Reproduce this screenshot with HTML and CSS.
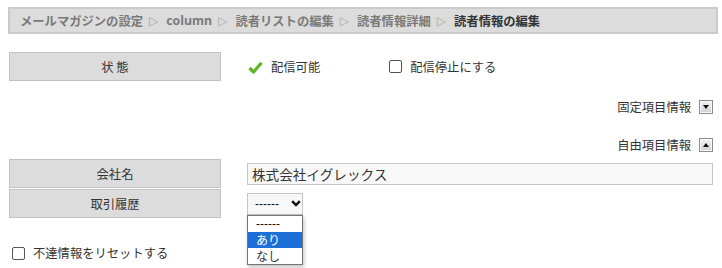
FILE: index.html
```html
<!DOCTYPE html>
<html lang="ja">
<head>
<meta charset="utf-8">
<link rel="stylesheet" href="styles.css">
</head>
<body>
<div class="crumb">
  <span class="c-link">メールマガジンの設定</span><span class="sep">▷</span><span class="c-link">column</span><span class="sep">▷</span><span class="c-link">読者リストの編集</span><span class="sep">▷</span><span class="c-link">読者情報詳細</span><span class="sep">▷</span><span class="c-cur">読者情報の編集</span>
</div>

<div class="row row-status">
  <div class="label">状 態</div>
  <div class="value">
    <svg class="check" width="15" height="13" viewBox="0 0 15 13"><path d="M1.5 7 L5.5 11 L13.5 1.8" fill="none" stroke="#5db828" stroke-width="3.2" stroke-linejoin="round"/></svg>
    <span class="ok">配信可能</span>
    <span class="cb"></span><span class="cb-text">配信停止にする</span>
  </div>
</div>

<div class="toggle t1"><span>固定項目情報</span><span class="tbtn"><span class="tri-down"></span></span></div>
<div class="toggle t2"><span>自由項目情報</span><span class="tbtn"><span class="tri-up"></span></span></div>

<div class="row row-company">
  <div class="label">会社名</div>
  <div class="value"><div class="input">株式会社イグレックス</div></div>
</div>
<div class="row row-history">
  <div class="label">取引履歴</div>
  <div class="value">
    <div class="select">
      <span class="sel-text">------</span>
      <svg class="chev" width="10" height="7" viewBox="0 0 10 7"><path d="M1.2 1.2 L5 5 L8.8 1.2" fill="none" stroke="#111" stroke-width="2.4"/></svg>
      <div class="popup">
        <div class="opt">------</div>
        <div class="opt sel">あり</div>
        <div class="opt">なし</div>
      </div>
    </div>
  </div>
</div>

<div class="reset"><span class="cb"></span><span class="cb-text">不達情報をリセットする</span></div>
</body>
</html>
```

FILE: styles.css
```css
html, body {
  margin: 0;
  padding: 0;
  background: #fff;
}
body {
  font-family: "Noto Sans CJK JP", "Noto Sans", sans-serif;
  font-size: 12px;
  color: #333;
  width: 722px;
  height: 268px;
  overflow: hidden;
}
.crumb {
  margin: 7px 4px 0 8px;
  height: 23px;
  border: 2px solid #cbcbcb;
  background: #dcdcdc;
  padding-left: 10px;
  display: flex;
  align-items: center;
  font-weight: bold;
  font-size: 12.3px;
  color: #7a7a7a;
  white-space: nowrap;
}
.c-link { font-family: "Open Sans", "Noto Sans CJK JP", sans-serif; }
.c-cur { color: #333; }
.sep {
  font-weight: normal;
  color: #a8a8a8;
  font-size: 12px;
  margin: 0 8px 0 6px;
  font-family: "DejaVu Sans", sans-serif;
}
.row {
  display: flex;
  margin-left: 9px;
}
.label {
  width: 210px;
  height: 27px;
  border: 1px solid #c2c2c2;
  background: #dcdcdc;
  display: flex;
  align-items: center;
  justify-content: center;
  font-size: 12.3px;
  color: #333;
}
.value {
  margin-left: 26px;
  display: flex;
  align-items: center;
}
.row-status { margin-top: 18px; }
.check { margin-left: 1px; margin-top: 1px; }
.ok { margin-left: 8px; font-size: 12.3px; }
.cb {
  display: inline-block;
  width: 11px;
  height: 11px;
  border: 1px solid #555;
  border-radius: 2px;
  background: #fff;
}
.row-status .cb { margin-left: 69px; }
.cb-text { margin-left: 8px; font-size: 12.3px; }
.toggle {
  display: flex;
  justify-content: flex-end;
  align-items: center;
  height: 14px;
  margin-right: 9px;
  font-size: 12.3px;
}
.t1 { margin-top: 19px; }
.t2 { margin-top: 24px; }
.tbtn {
  margin-left: 8px;
  width: 12px;
  height: 12px;
  border: 1px solid #8c8c8c;
  background: linear-gradient(#f2f2f2, #d2d2d2);
  display: flex;
  align-items: center;
  justify-content: center;
  box-shadow: inset 0 0 0 1px #fafafa;
}
.tri-down {
  width: 0; height: 0;
  border-left: 3px solid transparent;
  border-right: 3px solid transparent;
  border-top: 4px solid #111;
}
.tri-up {
  width: 0; height: 0;
  border-left: 3px solid transparent;
  border-right: 3px solid transparent;
  border-bottom: 4px solid #111;
}
.row-company { margin-top: 7px; }
.row-history { margin-top: 1px; }
.input {
  width: 460px;
  height: 20px;
  border: 1px solid #c6c6c6;
  background: #f8f8f8;
  padding-left: 4px;
  display: flex;
  align-items: center;
  font-size: 13.6px;
  color: #333;
}
.select {
  position: relative;
  width: 54px;
  height: 20px;
  border: 1px solid #c6c6c6;
  background: #f8f8f8;
  display: flex;
  align-items: center;
}
.sel-text {
  margin-left: 7px;
  font-size: 12px;
  color: #111;
  font-family: "Liberation Sans", sans-serif;
}
.chev { margin-left: 12px; }
.popup {
  position: absolute;
  left: -1px;
  top: 21px;
  width: 54px;
  border: 1px solid #767676;
  background: #fff;
  box-shadow: 1px 2px 4px rgba(0,0,0,0.25);
}
.opt {
  height: 16px;
  display: flex;
  align-items: center;
  padding-left: 8px;
  font-size: 12px;
  line-height: 1;
  color: #333;
}
.opt:first-child { font-family: "Liberation Sans", sans-serif; color: #111; }
.opt.sel { background: #1b6fd6; color: #fff; }
.reset {
  display: flex;
  align-items: center;
  margin-left: 12px;
  margin-top: 26px;
}
.reset .cb-text { margin-left: 8px; }
```
